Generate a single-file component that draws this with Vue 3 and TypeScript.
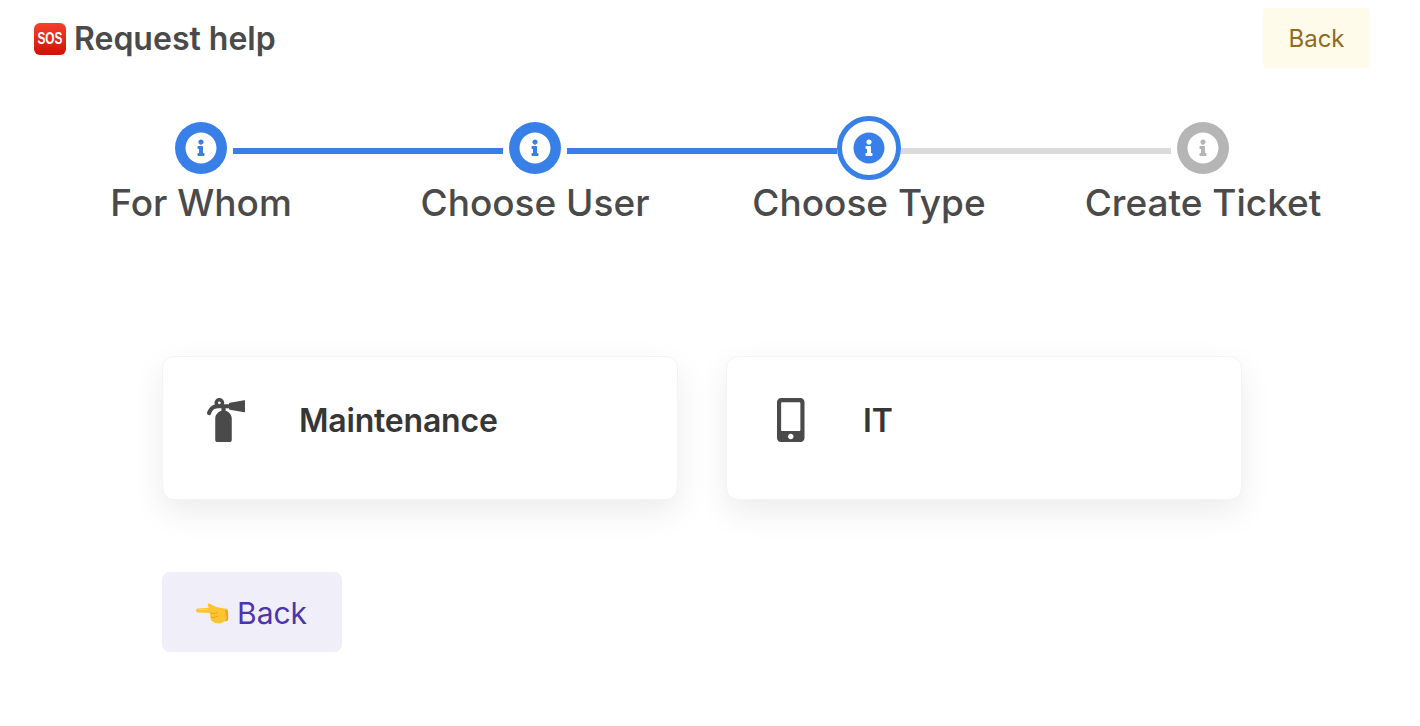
<script setup lang="ts">
const infoPath = 'M256 8C119.043 8 8 119.083 8 256c0 136.997 111.043 248 248 248s248-111.003 248-248C504 119.083 392.957 8 256 8zm0 110c23.196 0 42 18.804 42 42s-18.804 42-42 42-42-18.804-42-42 18.804-42 42-42zm56 254c0 6.627-5.373 12-12 12h-88c-6.627 0-12-5.373-12-12v-24c0-6.627 5.373-12 12-12h12v-64h-12c-6.627 0-12-5.373-12-12v-24c0-6.627 5.373-12 12-12h64c6.627 0 12 5.373 12 12v100h12c6.627 0 12 5.373 12 12v24z'

const steps = [
  { label: 'For Whom', state: 'done', left: '', right: 'on' },
  { label: 'Choose User', state: 'done', left: 'on', right: 'on' },
  { label: 'Choose Type', state: 'active', left: 'on', right: 'off' },
  { label: 'Create Ticket', state: 'todo', left: 'off', right: '' },
]
</script>

<template>
  <div class="page">
    <header class="top">
      <h1 class="title"><span class="sos"><span class="sos-text">SOS</span></span>Request help</h1>
      <button class="top-back">Back</button>
    </header>

    <div class="stepper">
      <div v-for="s in steps" :key="s.label" class="step">
        <div class="step-head">
          <span class="seg" :class="s.left"></span>
          <span class="dot-box">
            <span class="dot" :class="s.state">
              <svg viewBox="0 0 512 512" width="32" height="32"><path :d="infoPath" fill="currentColor" /></svg>
            </span>
          </span>
          <span class="seg" :class="s.right"></span>
        </div>
        <div class="step-label">{{ s.label }}</div>
      </div>
    </div>

    <main class="body">
      <div class="cards">
        <div class="card">
          <span class="card-icon">
            <svg viewBox="0 0 448 512" width="38.5" height="44"><path fill="currentColor" d="M434.027 26.329l-168 28C254.693 56.218 256 67.8 256 72h-58.332C208.353 36.108 181.446 0 144 0c-39.435 0-66.368 39.676-52.228 76.203-52.039 13.051-75.381 54.213-90.049 90.884-4.923 12.307 1.063 26.274 13.37 31.197 12.317 4.926 26.279-1.075 31.196-13.37C75.058 112.99 106.964 120 168 120v27.076c-41.543 10.862-72 49.235-72 94.129V488c0 13.255 10.745 24 24 24h144c13.255 0 24-10.745 24-24V240c0-44.731-30.596-82.318-72-92.975V120h40c0 4.178-1.317 15.779 10.027 17.671l168 28C441.375 166.89 448 161.538 448 154V38c0-7.538-6.625-12.89-13.973-11.671zM144 72c-8.822 0-16-7.178-16-16s7.178-16 16-16 16 7.178 16 16-7.178 16-16 16z" /></svg>
          </span>
          <span class="card-text">Maintenance</span>
        </div>
        <div class="card">
          <span class="card-icon phone">
            <svg viewBox="0 0 320 512" width="27.5" height="44"><path fill="currentColor" d="M272 0H48C21.5 0 0 21.5 0 48v416c0 26.5 21.5 48 48 48h224c26.5 0 48-21.5 48-48V48c0-26.5-21.5-48-48-48zM160 480c-17.7 0-32-14.3-32-32s14.3-32 32-32 32 14.3 32 32-14.3 32-32 32zm112-108c0 6.6-5.4 12-12 12H60c-6.6 0-12-5.4-12-12V60c0-6.6 5.4-12 12-12h200c6.6 0 12 5.4 12 12v312z" /></svg>
          </span>
          <span class="card-text">IT</span>
        </div>
      </div>

      <button class="back-btn">
        <svg class="hand" viewBox="0 0 34 21" width="34" height="21">
          <path fill="#fdc431" d="M1.800 5.400 13 4.800 11.800 2.600C11.200 1 12.400.2 13.800.8l6.400 3.200 9.800 1.800c1.300.3 2 1.200 2 2.400l.2 7.200c0 1.500-.9 2.500-2.400 2.700l-2 .4c-1.400 1.500-3 2.200-5 1.900l-4.200-.7c-2.400-.5-3.800-2.300-4.100-4.700L14 10 1.800 9.400C-.6 9.200-.6 5.600 1.800 5.400z" />
          <path fill="#eea21f" d="M14.500 9.800c2.600.4 5 0 7-1.100l.4.8c-2 1.300-4.800 1.700-7.400 1.300zM15 13.800c2.400.4 4.800 0 6.800-1.100l.4.8c-2 1.300-4.800 1.800-7.200 1.300zM29 6.800l2 .4c.6.2 1 .6 1 1.200l.2 7.200c0 1.500-.9 2.500-2.400 2.700l-.6.1c1-1 1.400-2.200 1.400-3.800z" />
          <path fill="#ffdc6a" d="M2.500 6.200 12 5.700l.4.8-9.900.4z" />
        </svg>
        <span class="back-label">Back</span>
      </button>
    </main>
  </div>
</template>

<style>
html, body { background: #fff; }
</style>

<style scoped>
.page { width: 1420px; height: 726px; overflow: hidden; font-family: Inter, 'Liberation Sans', sans-serif; color: #4a4a4a; box-sizing: border-box; }
.top { display: flex; justify-content: space-between; align-items: center; padding: 8px 50px 0 34px; height: 68px; box-sizing: border-box; }
.title { display: flex; align-items: center; margin: 0; padding-top: 1px; font-size: 32px; font-weight: 600; color: #4a4a4a; }
.sos { display: flex; align-items: center; justify-content: center; width: 32px; height: 32px; margin-right: 8px; border-radius: 6px; background: linear-gradient(#f4412c, #cc1306); color: #fff; font-family: 'Liberation Sans', sans-serif; font-size: 16px; font-weight: 700; line-height: 1; }
.sos-text { display: block; transform: scaleX(0.74); }
.top-back { width: 107px; height: 60px; border: none; border-radius: 4px; background: #fffbeb; color: #8f6a1f; font: 400 24px Inter, sans-serif; }

.stepper { display: grid; grid-template-columns: repeat(4, 334px); padding: 48px 0 0 34px; }
.step { display: flex; flex-direction: column; align-items: center; }
.step-head { display: flex; align-items: flex-start; width: 100%; }
.seg { flex: 1; height: 6px; margin-top: 32px; }
.seg.on { background: #3880e8; }
.seg.off { background: #dbdbdb; }
.dot-box { width: 64px; height: 64px; display: flex; align-items: center; justify-content: center; }
.dot { display: flex; align-items: center; justify-content: center; border-radius: 50%; box-sizing: border-box; }
.dot.done { width: 52px; height: 52px; background: #3880e8; color: #fff; }
.dot.active { width: 64px; height: 64px; border: 5px solid #3880e8; background: #fff; color: #3880e8; }
.dot.todo { width: 52px; height: 52px; background: #b5b5b5; color: #fff; }
.step-label { margin-top: 1px; font-size: 37px; line-height: 44px; font-weight: 500; color: #4a4a4a; }

.body { padding: 131px 0 0 162px; }
.cards { display: flex; gap: 48px; }
.card { width: 516px; height: 144px; box-sizing: border-box; padding: 40px 32px 56px 31px; display: flex; align-items: center; gap: 41px; background: #fff; border: 1px solid #f3f3f3; border-radius: 12px; box-shadow: 0 12px 32px rgba(0, 0, 0, 0.08); }
.card-icon { width: 64px; display: flex; justify-content: center; color: #4a4a4a; }
.phone { padding-left: 2px; box-sizing: border-box; }
.card-text { padding-top: 2px; font-size: 32px; line-height: 48px; font-weight: 600; letter-spacing: -0.2px; color: #363636; }

.back-btn { display: flex; align-items: center; gap: 7px; width: 180px; height: 80px; margin-top: 72px; padding: 0 0 0 34px; border: none; border-radius: 8px; background: #f0eff9; color: #4c34ae; font: 400 30px Inter, sans-serif; }
.hand { flex: none; margin-top: 3px; }
.back-label { padding-top: 1px; }
</style>
